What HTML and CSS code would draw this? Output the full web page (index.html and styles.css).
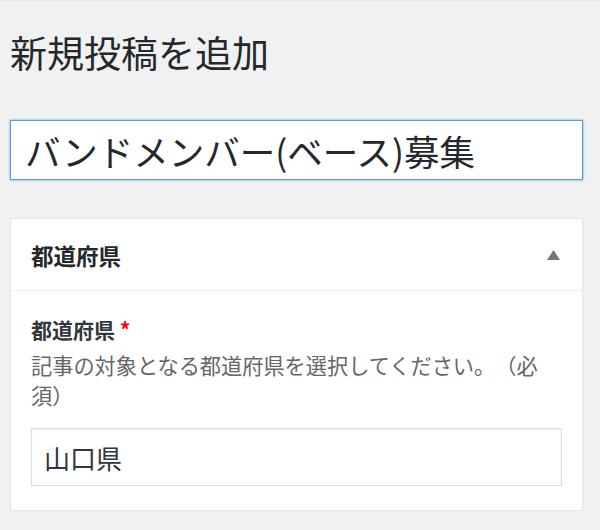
FILE: index.html
```html
<!DOCTYPE html>
<html lang="ja">
<head>
  <meta charset="UTF-8">
  <title>新規投稿を追加</title>
  <link rel="stylesheet" href="styles.css">
</head>
<body>

<div class="wrap">
  <h1 class="page-title">新規投稿を追加</h1>

  <input class="post-title" type="text" value="バンドメンバー(ベース)募集">

  <div class="postbox">
    <div class="postbox-header">
      <h2 class="postbox-title">都道府県</h2>
      <svg class="toggle" width="13" height="10" viewBox="0 0 13 10">
        <polygon points="6.5,0 13,10 0,10" fill="#72777c"/>
      </svg>
    </div>
    <div class="postbox-inside">
      <label class="field-label" for="pref">都道府県 <span class="required">*</span></label>
      <p class="field-desc">記事の対象となる都道府県を選択してください。（必須）</p>
      <input class="field-input" id="pref" type="text" value="山口県">
    </div>
  </div>
</div>

</body>
</html>
```

FILE: styles.css
```css
body{
  margin: 0;
  background: #f1f1f1;
  border-top: 1px solid #e6e6e6;
  font-family: "Noto Sans CJK JP", "Noto Sans", sans-serif;
  color: #23282d;
  text-spacing-trim: space-all;
}

.wrap{
  padding: 29px 17px 0 10px;
}

.page-title{
  margin: 0;
  font-size: 37px;
  line-height: 44px;
  font-weight: 400;
  color: #23282d;
}

.post-title{
  display: block;
  box-sizing: border-box;
  width: 100%;
  height: 60px;
  margin: 46px 0 0;
  padding: 0 14px;
  border: 1px solid #5b9dd9;
  box-shadow: 0 0 2px rgba(30,140,190,.8);
  background: #fff;
  font-family: inherit;
  font-size: 35.5px;
  color: #23282d;
  outline: none;
}

.postbox{
  margin-top: 38px;
  background: #fff;
  border: 1px solid #e5e5e5;
  box-shadow: 0 1px 1px rgba(0,0,0,.04);
}

.postbox-header{
  display: flex;
  align-items: center;
  justify-content: space-between;
  height: 71px;
  padding: 0 22px 0 20px;
  border-bottom: 1px solid #eee;
}

.postbox-title{
  margin: 0;
  font-size: 22.5px;
  font-weight: 700;
  line-height: 30px;
}

.toggle{
  display: block;
}

.postbox-inside{
  padding: 23px 20px 24px;
}

.field-label{
  display: block;
  font-size: 21px;
  font-weight: 700;
  line-height: 30px;
  color: #32373c;
}

.required{
  color: #f00;
}

.field-desc{
  margin: 6px 0 0;
  font-size: 21.2px;
  line-height: 30px;
  color: #666;
  text-spacing-trim: space-all;
}

.field-input{
  display: block;
  box-sizing: border-box;
  width: 100%;
  height: 58px;
  margin-top: 18px;
  padding: 0 12px;
  border: 1px solid #ddd;
  box-shadow: inset 0 1px 2px rgba(0,0,0,.07);
  background: #fff;
  font-family: inherit;
  font-size: 26px;
  color: #32373c;
  outline: none;
}
```
